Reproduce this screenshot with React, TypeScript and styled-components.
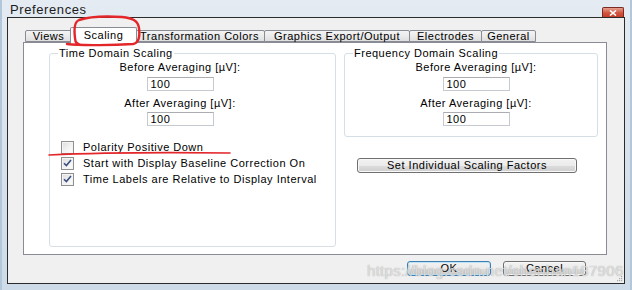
import React from 'react';
import styled, { createGlobalStyle } from 'styled-components';

const GlobalStyle = createGlobalStyle`
  html, body { margin: 0; padding: 0; background: #fff; }
  body { font-family: "Liberation Sans", Arial, sans-serif; }
`;

const Window = styled.div`
  position: relative;
  width: 632px;
  height: 290px;
  display: flex;
  flex-direction: column;
  box-sizing: border-box;
  overflow: hidden;
  background: linear-gradient(180deg, #e4ebf2 0%, #dbe4ee 40%, #cddbe9 100%);
  border-left: 2px solid #b3c7db;
  border-right: 2px solid #b3c7db;
`;

const TitleBar = styled.div`
  height: 17px;
  display: flex;
  align-items: flex-start;
  justify-content: space-between;
  padding-left: 8px;
`;

const Title = styled.span`
  font-size: 13px;
  letter-spacing: 0.6px;
  line-height: 17px;
  color: #1b1b1b;
  margin-top: 1px;
`;

const CloseButton = styled.div`
  width: 20px;
  height: 10px;
  margin-top: 7px;
  margin-right: 6px;
  border: 1px solid #7a2a22;
  border-bottom: none;
  border-radius: 2px 2px 0 0;
  background: linear-gradient(180deg, #e6a08f 0%, #d2533d 50%, #c23a24 100%);
  display: flex;
  align-items: center;
  justify-content: center;
`;

const Client = styled.div`
  position: relative;
  flex: 1;
  margin: 0 5px 6px 5px;
  border: 1px solid #2b2b2b;
  background: #f0f0f0;
  padding: 9px 17px 0 15px;
  display: flex;
  flex-direction: column;
`;

const TabStrip = styled.div`
  height: 15px;
  display: flex;
  align-items: flex-end;
  padding-left: 2px;
`;

const Tab = styled.div<{ $w: number; $active?: boolean }>`
  box-sizing: border-box;
  width: ${p => p.$w + (p.$active ? 4 : 0)}px;
  height: ${p => (p.$active ? 16 : 12)}px;
  margin: 0 ${p => (p.$active ? -2 : 0)}px ${p => (p.$active ? -1 : 0)}px;
  margin-left: ${p => (p.$active ? -2 : -1)}px;
  position: relative;
  z-index: ${p => (p.$active ? 2 : 1)};
  border: 1px solid #898c95;
  border-bottom: ${p => (p.$active ? 'none' : '1px solid #898c95')};
  border-radius: 2px 2px 0 0;
  background: ${p =>
    p.$active ? '#fff' : 'linear-gradient(180deg, #f3f3f3 0%, #ebebeb 50%, #dedede 100%)'};
  font-size: 11px;
  letter-spacing: 0.5px;
  line-height: ${p => (p.$active ? 14 : 11)}px;
  text-align: center;
  color: #000;
  white-space: nowrap;
  &:first-child { margin-left: 0; }
`;

const Panel = styled.div`
  height: 213px;
  box-sizing: border-box;
  border: 1px solid #898c95;
  background: #fff;
  display: flex;
  gap: 8px;
  padding: 10px 0 0 25px;
`;

const Column = styled.div`
  display: flex;
  flex-direction: column;
`;

const GroupBox = styled.div<{ $w: number; $h: number }>`
  box-sizing: border-box;
  width: ${p => p.$w}px;
  height: ${p => p.$h}px;
  border: 1px solid #d5dfe5;
  border-radius: 3px;
  display: flex;
  flex-direction: column;
`;

const Caption = styled.span`
  align-self: flex-start;
  margin: -7px 0 0 8px;
  padding: 0 1px;
  background: #fff;
  font-size: 11px;
  letter-spacing: 0.5px;
  line-height: 13px;
  color: #000;
`;

const FieldStack = styled.div<{ $left: number }>`
  width: 140px;
  margin-left: ${p => p.$left}px;
  display: flex;
  flex-direction: column;
  align-items: center;
`;

const FieldLabel = styled.span<{ $top: number }>`
  margin-top: ${p => p.$top}px;
  font-size: 11px;
  letter-spacing: 0.5px;
  line-height: 13px;
  color: #000;
`;

const NumberBox = styled.div<{ $top: number }>`
  box-sizing: border-box;
  width: 67px;
  height: 14px;
  margin-top: ${p => p.$top}px;
  border: 1px solid #c5c9d0;
  border-top-color: #abadb3;
  background: #fff;
  padding-left: 3px;
  font-size: 11px;
  letter-spacing: 0.5px;
  line-height: 12px;
  color: #000;
  align-self: center;
`;

const CheckList = styled.div`
  margin-top: 13px;
  display: flex;
  flex-direction: column;
`;

const CheckRow = styled.div`
  height: 16px;
  display: flex;
  align-items: center;
  padding-left: 11px;
  gap: 9px;
  font-size: 11px;
  letter-spacing: 0.5px;
  color: #000;
  white-space: nowrap;
`;

const Box = styled.div`
  box-sizing: border-box;
  width: 13px;
  height: 13px;
  border: 1px solid #8f8f8f;
  background: linear-gradient(135deg, #dcdcdc 0%, #f4f4f4 60%, #fdfdfd 100%);
  box-shadow: inset 0 0 0 1px #f4f4f4;
  display: flex;
  align-items: center;
  justify-content: center;
`;

const PushButton = styled.div<{ $w: number; $default?: boolean }>`
  box-sizing: border-box;
  width: ${p => p.$w}px;
  height: 15px;
  border: 1px solid ${p => (p.$default ? '#3c7fb1' : '#707070')};
  border-radius: 3px;
  background: linear-gradient(180deg, #f2f2f2 0%, #ebebeb 50%, #dddddd 51%, #cfcfcf 100%);
  box-shadow: ${p => (p.$default ? 'inset 0 0 0 1px #bfe4f8' : 'inset 0 0 0 1px #f8f8f8')};
  font-size: 11px;
  letter-spacing: 0.5px;
  line-height: 13px;
  text-align: center;
  color: #000;
`;

const SideButton = styled(PushButton)`
  margin: 21px 0 0 13px;
`;

const ButtonRow = styled.div`
  display: flex;
  justify-content: flex-end;
  gap: 12px;
  margin-top: 6px;
  padding-right: 21px;
`;

const Grip = styled.svg`
  position: absolute;
  right: 1px;
  bottom: 1px;
`;

const Watermark = styled.div`
  position: absolute;
  z-index: 5;
  left: 365px;
  top: 262px;
  font-family: "Liberation Sans", Arial, sans-serif;
  font-size: 15px;
  letter-spacing: 0.3px;
  color: rgba(238, 238, 238, 0.8);
  text-shadow: 0 0 1px rgba(110, 110, 110, 0.7);
  pointer-events: none;
  white-space: nowrap;
`;

const Ink = styled.svg`
  position: absolute;
  z-index: 6;
  left: 0;
  top: 0;
  pointer-events: none;
`;

const tabs: { label: string; w: number }[] = [
  { label: 'Views', w: 47 },
  { label: 'Scaling', w: 63 },
  { label: 'Transformation Colors', w: 131 },
  { label: 'Graphics Export/Output', w: 146 },
  { label: 'Electrodes', w: 73 },
  { label: 'General', w: 55 },
];

const Check = () => (
  <svg width="9" height="8" viewBox="0 0 9 8">
    <path d="M1 4.2 L3.4 6.6 L8 1" fill="none" stroke="#3b4f7d" strokeWidth="1.6" />
  </svg>
);

const Fields = ({ left }: { left: number }) => (
  <FieldStack $left={left}>
    <FieldLabel $top={1}>Before Averaging [µV]:</FieldLabel>
    <NumberBox $top={3}>100</NumberBox>
    <FieldLabel $top={6}>After Averaging [µV]:</FieldLabel>
    <NumberBox $top={2}>100</NumberBox>
  </FieldStack>
);

const App = () => {
  return (
    <>
      <GlobalStyle />
      <Window>
        <TitleBar>
          <Title>Preferences</Title>
          <CloseButton>
            <svg width="8" height="6" viewBox="0 0 8 6">
              <path d="M1 0.5 L7 5.5 M7 0.5 L1 5.5" stroke="#fff" strokeWidth="1.6" />
            </svg>
          </CloseButton>
        </TitleBar>
        <Client>
          <TabStrip>
            {tabs.map(t => (
              <Tab key={t.label} $w={t.w} $active={t.label === 'Scaling'}>
                {t.label}
              </Tab>
            ))}
          </TabStrip>
          <Panel>
            <GroupBox $w={287} $h={194}>
              <Caption>Time Domain Scaling</Caption>
              <Fields left={60} />
              <CheckList>
                <CheckRow>
                  <Box />
                  Polarity Positive Down
                </CheckRow>
                <CheckRow>
                  <Box>
                    <Check />
                  </Box>
                  Start with Display Baseline Correction On
                </CheckRow>
                <CheckRow>
                  <Box>
                    <Check />
                  </Box>
                  Time Labels are Relative to Display Interval
                </CheckRow>
              </CheckList>
            </GroupBox>
            <Column>
              <GroupBox $w={254} $h={84}>
                <Caption>Frequency Domain Scaling</Caption>
                <Fields left={61} />
              </GroupBox>
              <SideButton $w={220}>Set Individual Scaling Factors</SideButton>
            </Column>
          </Panel>
          <ButtonRow>
            <PushButton $w={84} $default>OK</PushButton>
            <PushButton $w={83}>Cancel</PushButton>
          </ButtonRow>
          <Grip width="7" height="7" viewBox="0 0 7 7">
            <rect x="5" y="1" width="1.2" height="1.2" fill="#a8a8a8" />
            <rect x="3" y="3" width="1.2" height="1.2" fill="#a8a8a8" />
            <rect x="5" y="3" width="1.2" height="1.2" fill="#a8a8a8" />
            <rect x="1" y="5" width="1.2" height="1.2" fill="#a8a8a8" />
            <rect x="3" y="5" width="1.2" height="1.2" fill="#a8a8a8" />
            <rect x="5" y="5" width="1.2" height="1.2" fill="#a8a8a8" />
          </Grip>
        </Client>
        <Watermark>https://blog.csdn.net/chenhan187906</Watermark>
        <Ink width="632" height="290" viewBox="0 0 632 290">
          <path
            d="M65 44 C74 45 104 46 131 44 C137 43 138 36 137 28 C136 21 131 18 120 17 C104 16 86 17 77 20 C72 22 72 30 73 38 C73 42 75 45 81 45"
            fill="none"
            stroke="#e3262a"
            strokeWidth="2.4"
            strokeLinecap="round"
          />
          <path
            d="M47 155 C90 153 150 152 228 153"
            fill="none"
            stroke="#e3262a"
            strokeWidth="1.6"
            strokeLinecap="round"
          />
        </Ink>
      </Window>
    </>
  );
};

export default App;
